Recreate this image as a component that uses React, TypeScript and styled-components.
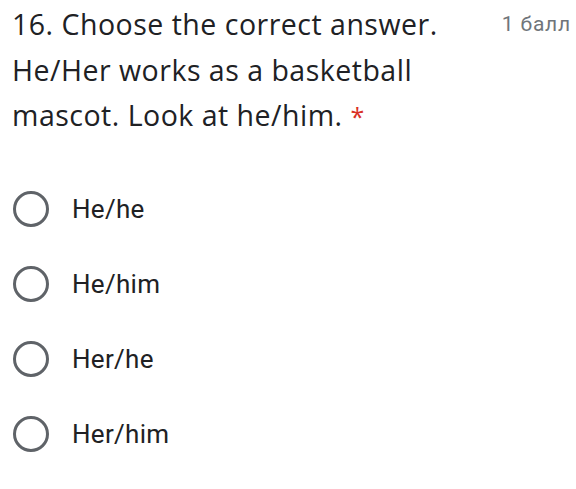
import styled, { createGlobalStyle } from "styled-components";

const Global = createGlobalStyle`
  body {
    margin: 0;
    background: #ffffff;
  }
`;

const options = ["He/he", "He/him", "Her/he", "Her/him"];

const App = () => {
  return (
    <Page>
      <Global />
      <Header>
        <Title>
          16. Choose the correct answer. He/Her works as a basketball mascot.
          Look at he/him. <Star>*</Star>
        </Title>
        <Points>1 балл</Points>
      </Header>
      <List>
        {options.map((o) => (
          <Option key={o}>
            <Radio />
            <Label>{o}</Label>
          </Option>
        ))}
      </List>
    </Page>
  );
};

export default App;

const Page = styled.div`
  width: 576px;
  height: 489px;
  padding: 2px 5px 0 12px;
  box-sizing: border-box;
  overflow: hidden;
`;

const Header = styled.div`
  display: flex;
  justify-content: space-between;
  align-items: flex-start;
`;

const Title = styled.div`
  width: 450px;
  font-family: "Open Sans", sans-serif;
  font-size: 28.5px;
  line-height: 45.5px;
  color: #202124;
  letter-spacing: 0.5px;
`;

const Star = styled.span`
  color: #d93025;
  font-size: 25px;
  letter-spacing: 0;
`;

const Points = styled.div`
  font-family: Roboto, sans-serif;
  font-size: 21px;
  letter-spacing: 0.8px;
  color: #70757a;
  margin-top: 10px;
`;

const List = styled.div`
  display: flex;
  flex-direction: column;
  gap: 39px;
  margin-top: 51px;
`;

const Option = styled.div`
  display: flex;
  align-items: center;
  height: 36px;
`;

const Radio = styled.div`
  width: 36px;
  height: 36px;
  border: 3px solid #5f6368;
  border-radius: 50%;
  box-sizing: border-box;
  margin-left: 1px;
  margin-right: 23px;
`;

const Label = styled.div`
  font-family: Roboto, sans-serif;
  font-size: 26px;
  letter-spacing: 0.3px;
  color: #202124;
`;
